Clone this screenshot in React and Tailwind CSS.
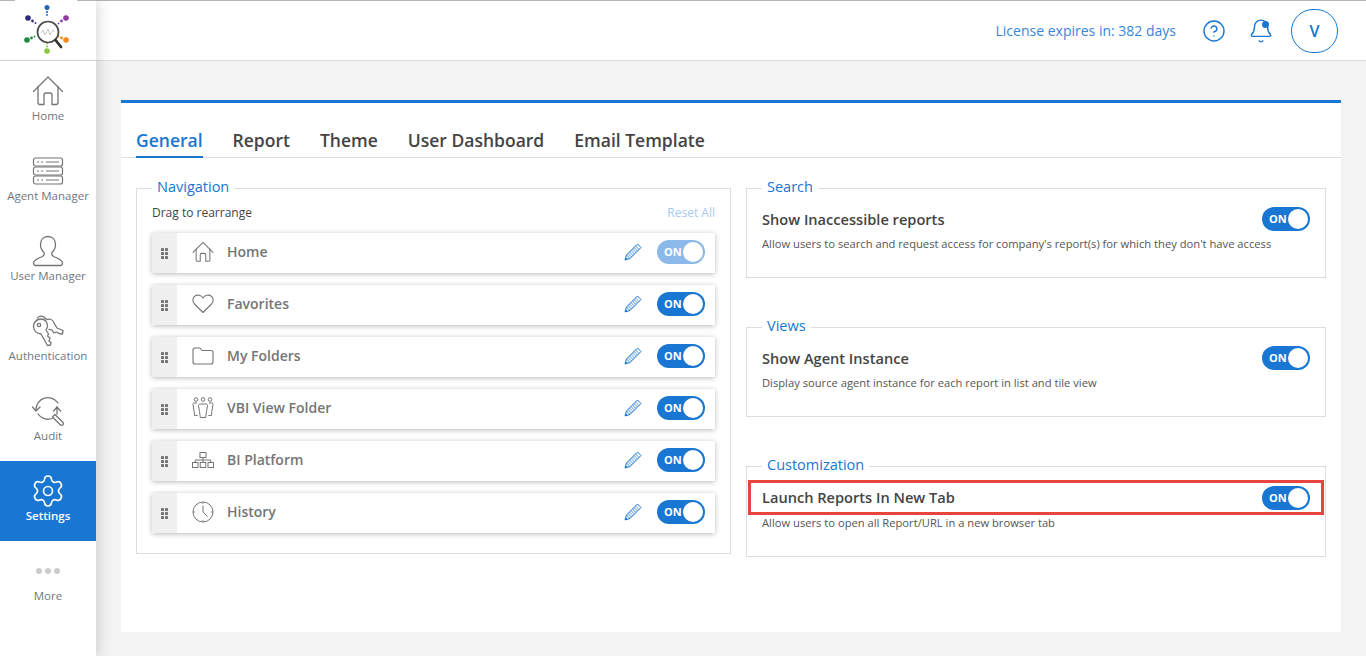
import React from "react";
import { Bell, CircleHelp, Settings } from "lucide-react";

const Logo = () => (
  <svg width="56" height="56" viewBox="0 0 56 56">
    <g fill="#1f66b8">
      <circle cx="29" cy="4.500" r="2.500" />
      <circle cx="29" cy="9" r="1.100" />
      <circle cx="29" cy="12" r="0.900" />
    </g>
    <g fill="#2b2a7c">
      <circle cx="10" cy="15" r="2.800" />
      <circle cx="14.500" cy="18" r="1.400" />
      <circle cx="17.500" cy="20" r="0.900" />
    </g>
    <g fill="#8e3aa0">
      <circle cx="48" cy="15" r="2.800" />
      <circle cx="43.500" cy="18" r="1.400" />
      <circle cx="40.500" cy="20.500" r="0.900" />
    </g>
    <g fill="#1a8a3c">
      <circle cx="9" cy="37" r="2.800" />
      <circle cx="13.500" cy="35" r="1.400" />
      <circle cx="16.500" cy="33.500" r="0.900" />
    </g>
    <g fill="#f28a1c">
      <circle cx="48" cy="37" r="2.800" />
      <circle cx="43.500" cy="35" r="1.400" />
      <circle cx="40.500" cy="33.500" r="0.900" />
    </g>
    <g fill="#8cc63f">
      <circle cx="29" cy="48" r="2.800" />
      <circle cx="29" cy="43.500" r="1.100" />
      <circle cx="29" cy="40.500" r="0.900" />
    </g>
    <circle cx="30" cy="29" r="10.500" fill="none" stroke="#4a4a4a" strokeWidth="1.700" />
    <path d="M23 30 l2 -3 l2 5 l3 -6 l2 6 l3 -5 l2 2" fill="none" stroke="#b5b5b5" strokeWidth="0.700" />
    <path d="M37.500 37 L43 44" stroke="#333" strokeWidth="2.800" strokeLinecap="round" />
  </svg>
);

const HomeIcon = ({ size = 32 }) => (
  <svg width={size} height={size} viewBox="0 0 32 32" fill="none" stroke="currentColor" strokeWidth={size > 24 ? 1.3 : 1.5} strokeLinecap="round" strokeLinejoin="round">
    <path d="M1.500 16.500 L16 2 L30.500 16.500" />
    <path d="M6 11.500 V27.500 a2 2 0 0 0 2 2 h4 V20 a2 2 0 0 1 2 -2 h4 a2 2 0 0 1 2 2 V29.500 h4 a2 2 0 0 0 2 -2 V11.500" />
  </svg>
);

const ServerIcon = () => (
  <svg width="32" height="28" viewBox="0 0 32 28" fill="none" stroke="currentColor" strokeWidth="1.200">
    <rect x="1.500" y="1" width="29" height="8" rx="2" />
    <rect x="1.500" y="10" width="29" height="8" rx="2" />
    <rect x="1.500" y="19" width="29" height="8" rx="2" />
    <path d="M5 5h2M9 5h2M14 5h13M5 14h2M9 14h2M14 14h13M5 23h2M9 23h2M14 23h13" />
  </svg>
);

const UserIcon = () => (
  <svg width="32" height="32" viewBox="0 0 32 32" fill="none" stroke="currentColor" strokeWidth="1.300" strokeLinejoin="round">
    <path d="M16 1.500 c-5 0 -7.500 3.500 -7.500 8 c0 3.500 1.500 6 3.500 8 c0.500 1.500 0 3 -1.500 4 c-3 1.500 -8.500 2.500 -9 6.500 c0 1.500 0.500 2.500 2 2.500 h25 c1.500 0 2 -1 2 -2.500 c-0.500 -4 -6 -5 -9 -6.500 c-1.500 -1 -2 -2.500 -1.500 -4 c2 -2 3.500 -4.500 3.500 -8 c0 -4.500 -2.500 -8 -7.500 -8 z" />
  </svg>
);

const KeysIcon = () => (
  <svg width="32" height="32" viewBox="0 0 32 32" fill="none" stroke="currentColor" strokeWidth="1.300" strokeLinejoin="round">
    <path d="M3 7 C6 3 12 3 14.500 7 C16 10 15.500 13 14 15 L16.500 19 L15.500 21 L18 23 L17 26 L19 27.500 L18.500 30 L15.500 30.500 L9 19 C5 18.500 2 16 1.500 12 C1.500 10 2 8 3 7 Z" />
    <path d="M5 3.500 C7 0.500 11 0.500 13 3 L15 4.500 C18 3.500 21 5 22 8 L25 13 L31 15.500 L30.500 19 L27 18.500 L24.500 17 L22 18 L20 15 C18.500 15 17.500 14.500 16.500 14" />
    <circle cx="7" cy="10" r="1.700" />
  </svg>
);

const AuditIcon = () => (
  <svg width="32" height="32" viewBox="0 0 32 32" fill="none" stroke="currentColor" strokeWidth="1.300" strokeLinecap="round" strokeLinejoin="round">
    <path d="M4 15 A12 12 0 0 1 26 8" />
    <path d="M6 19 A12 12 0 0 0 20 23.500" />
    <path d="M0.500 12 L4 16 L8 12" />
    <path d="M21.500 16 L25 12 L28.500 16" />
    <path d="M25 12 V19" />
    <path d="M20.500 22 L23 19.500 L31 27.500 A1.800 1.800 0 0 1 28.500 30 Z" />
  </svg>
);

const HeartIcon = () => (
  <svg width="22" height="20" viewBox="0 0 22 20" fill="none" stroke="currentColor" strokeWidth="1.100" strokeLinejoin="round">
    <path d="M11 18.500 L2.500 10 C0 7.500 0.500 3.500 3 2 C5.500 0.500 9 1 11 4 C13 1 16.500 0.500 19 2 C21.500 3.500 22 7.500 19.500 10 Z" />
  </svg>
);

const FolderIcon = () => (
  <svg width="22" height="18" viewBox="0 0 22 18" fill="none" stroke="currentColor" strokeWidth="1.100" strokeLinejoin="round">
    <path d="M1 3 a2 2 0 0 1 2 -2 h5 l2 2.500 h9 a2 2 0 0 1 2 2 v9.500 a2 2 0 0 1 -2 2 h-16 a2 2 0 0 1 -2 -2 z" />
  </svg>
);

const PeopleIcon = () => (
  <svg width="22" height="22" viewBox="0 0 22 22" fill="none" stroke="currentColor" strokeWidth="1">
    <circle cx="4" cy="2.500" r="1.800" />
    <circle cx="11" cy="2.500" r="1.800" />
    <circle cx="18" cy="2.500" r="1.800" />
    <path d="M7.500 7 h7 c0.800 0 1 1 1 1.500 l-1 6 l-0.800 6 h-5.400 l-0.800 -6 l-1 -6 c0 -0.500 0.200 -1.500 1 -1.500 z" />
    <path d="M5 6 h-3 c-0.800 0 -1 1 -1 1.500 l1 6 l0.600 5 h3" />
    <path d="M17 6 h3 c0.800 0 1 1 1 1.500 l-1 6 l-0.600 5 h-3" />
  </svg>
);

const TreeIcon = () => (
  <svg width="22" height="16" viewBox="0 0 22 16" fill="none" stroke="currentColor" strokeWidth="1">
    <rect x="8" y="0.500" width="6" height="5" />
    <rect x="0.500" y="10.500" width="5.500" height="5" />
    <rect x="8.250" y="10.500" width="5.500" height="5" />
    <rect x="16" y="10.500" width="5.500" height="5" />
    <path d="M11 5.500 V10.500 M3.250 10.500 V8 H18.750 V10.500" />
  </svg>
);

const ClockIcon = () => (
  <svg width="22" height="22" viewBox="0 0 22 22" fill="none" stroke="currentColor" strokeWidth="1">
    <circle cx="11" cy="11" r="10" />
    <path d="M11 4.500 V11 L15.500 15.500" />
    <path d="M11 1.500 v1.500 M11 19 v1.500 M1.500 11 h1.500 M19 11 h1.500" />
  </svg>
);

const PencilIcon = () => (
  <svg width="18" height="18" viewBox="0 0 18 18" fill="none" stroke="#1976d2" strokeWidth="1">
    <path d="M13.500 1 L17 4.500 L6 15.500 L1 17 L2.500 12 Z" />
    <path d="M11.500 3 L15 6.500 M10 4.500 L13.500 8 M8.500 6 L12 9.500 M7 7.500 L10.500 11 M5.500 9 L9 12.500 M4 10.500 L7.500 14 M2.500 12 L6 15.500" strokeWidth="0.800" />
    <path d="M3 16.500 L1.500 15" strokeWidth="1.500" />
  </svg>
);

const Grip = () => (
  <svg width="7" height="11" viewBox="0 0 7 11" fill="#757575">
    <rect x="0" y="0" width="3" height="3" rx="0.600" />
    <rect x="4" y="0" width="3" height="3" rx="0.600" />
    <rect x="0" y="4" width="3" height="3" rx="0.600" />
    <rect x="4" y="4" width="3" height="3" rx="0.600" />
    <rect x="0" y="8" width="3" height="3" rx="0.600" />
    <rect x="4" y="8" width="3" height="3" rx="0.600" />
  </svg>
);

const Toggle = ({ faded }) => (
  <div className={`flex h-6 w-12 shrink-0 items-center justify-between rounded-full bg-[#1976d2] pl-[7px] pr-0.5 ${faded ? "opacity-50" : ""}`}>
    <span className="text-[11px] font-bold text-white">ON</span>
    <span className="h-5 w-5 rounded-full bg-white"></span>
  </div>
);

const sideItems = [
  { label: "Home", icon: <HomeIcon /> },
  { label: "Agent Manager", icon: <ServerIcon /> },
  { label: "User Manager", icon: <UserIcon /> },
  { label: "Authentication", icon: <KeysIcon /> },
  { label: "Audit", icon: <AuditIcon /> },
  { label: "Settings", icon: <Settings size={36} strokeWidth={1.1} />, active: true },
];

const navRows = [
  { label: "Home", icon: <HomeIcon size={22} />, faded: true },
  { label: "Favorites", icon: <HeartIcon /> },
  { label: "My Folders", icon: <FolderIcon /> },
  { label: "VBI View Folder", icon: <PeopleIcon /> },
  { label: "BI Platform", icon: <TreeIcon /> },
  { label: "History", icon: <ClockIcon /> },
];

const tabs = ["General", "Report", "Theme", "User Dashboard", "Email Template"];

const Section = ({ title, className, children }) => (
  <fieldset className={`border border-[#dedede] ${className}`}>
    <legend className="ml-[15px] px-[5px] pb-[2px] text-[14.5px] leading-[18px] text-[#1976d2]">{title}</legend>
    {children}
  </fieldset>
);

const Sidebar = () => (
  <aside className="z-10 flex w-24 shrink-0 flex-col bg-white shadow-[3px_0_12px_rgba(0,0,0,0.14)]">
    <div className="relative flex h-[61px] items-center justify-center border-t border-b border-t-[#b5b5b5] border-b-[#d0d0d0] pr-1">
      <div className="absolute -top-px left-[15px] h-px w-[62px] bg-white"></div>
      <Logo />
    </div>
    {sideItems.map((item) => (
      <div
        key={item.label}
        className={`flex h-20 flex-col items-center pt-[13px] ${item.active ? "bg-[#1976d2] text-white" : "text-[#757575]"}`}
      >
        <div className="flex h-[34px] items-center justify-center">{item.icon}</div>
        <span className={`mt-px text-[11.5px] leading-[14px] ${item.active ? "font-semibold text-white" : "font-medium text-[#6f7880]"}`}>
          {item.label}
        </span>
      </div>
    ))}
    <div className="flex h-20 flex-col items-center pt-[27px]">
      <div className="flex gap-[3px]">
        <span className="h-[6px] w-[6px] rounded-full bg-[#cccccc]"></span>
        <span className="h-[6px] w-[6px] rounded-full bg-[#cccccc]"></span>
        <span className="h-[6px] w-[6px] rounded-full bg-[#cccccc]"></span>
      </div>
      <span className="mt-[15px] text-[11.5px] font-medium leading-[14px] text-[#6f7880]">More</span>
    </div>
  </aside>
);

const TopBar = () => (
  <header className="flex h-[61px] shrink-0 items-center justify-end border-t border-b border-t-[#b5b5b5] border-b-[#dedede] bg-white pr-[28px] text-[#1976d2]">
    <span className="text-[14px] text-[#3a86d8]">License expires in: 382 days</span>
    <CircleHelp className="ml-[26px]" size={24} strokeWidth={1.4} />
    <div className="relative ml-[22px]">
      <Bell size={26} strokeWidth={1.3} />
      <span className="absolute right-[5px] top-[3px] h-[7px] w-[7px] rounded-full bg-[#1976d2]"></span>
    </div>
    <div className="ml-[17px] flex h-[44px] w-[47px] items-center justify-center rounded-full border border-[#1976d2] text-[16px] font-semibold">
      V
    </div>
  </header>
);

const Setting = ({ title, desc }) => (
  <div className="px-[15px]">
    <div className="flex h-[24px] items-center justify-between">
      <span className="pt-px text-[14.6px] font-semibold text-[#444444]">{title}</span>
      <Toggle />
    </div>
    <p className="mt-[2px] text-[11.2px] leading-[22px] text-[#555555]">{desc}</p>
  </div>
);

export default function App() {
  return (
    <div className="flex h-[656px] w-[1366px] overflow-hidden bg-[#f3f3f3] font-['Open_Sans',sans-serif]">
      <Sidebar />
      <div className="flex min-w-0 flex-1 flex-col">
        <TopBar />
        <main className="mt-[39px] ml-[25px] mr-[25px] flex h-[532px] flex-col border-t-[3px] border-[#1976d2] bg-white">
          <nav className="mt-[23px] flex h-[32px] gap-[30px] border-b border-[#dedede] pl-[15px]">
            {tabs.map((tab, i) => (
              <div
                key={tab}
                className={`h-[32px] text-[17.5px] font-semibold leading-[28px] ${i === 0 ? "border-b-2 border-[#1976d2] text-[#1976d2]" : "text-[#444444]"}`}
              >
                {tab}
              </div>
            ))}
          </nav>
          <div className="mt-[20px] flex gap-[15px] px-[15px]">
            <Section title="Navigation" className="h-[376px] w-[595px]">
              <div className="flex items-center justify-between px-[15px] pt-[6px] text-[12px] leading-[18px]">
                <span className="text-[#444444]">Drag to rearrange</span>
                <span className="text-[#a8c9f0]">Reset All</span>
              </div>
              <div className="mt-[11px] flex flex-col gap-[12px] px-[15px]">
                {navRows.map((row) => (
                  <div key={row.label} className="flex h-10 bg-white shadow-[0_1px_5px_rgba(0,0,0,0.28)]">
                    <div className="flex w-[25px] items-center justify-center bg-[#f0f0f0]">
                      <Grip />
                    </div>
                    <div className="flex flex-1 items-center pb-[2px]">
                      <div className="flex w-[50px] items-center justify-center pl-[1px] text-[#757575]">{row.icon}</div>
                      <span className="flex-1 pb-[2px] text-[14px] font-semibold text-[#757575]">{row.label}</span>
                      <PencilIcon />
                      <div className="ml-[15px] mr-[10px]">
                        <Toggle faded={row.faded} />
                      </div>
                    </div>
                  </div>
                ))}
              </div>
            </Section>
            <div className="flex w-[580px] flex-col gap-[39px]">
              <Section title="Search" className="h-[100px] pt-[9px]">
                <Setting
                  title="Show Inaccessible reports"
                  desc="Allow users to search and request access for company's report(s) for which they don't have access"
                />
              </Section>
              <Section title="Views" className="h-[100px] pt-[9px]">
                <Setting
                  title="Show Agent Instance"
                  desc="Display source agent instance for each report in list and tile view"
                />
              </Section>
              <Section title="Customization" className="h-[101px]">
                <div className="mx-[1px] mt-[4px] flex h-[35px] items-center justify-between border-[3px] border-[#e8453f] px-[11px]">
                  <span className="text-[14.6px] font-semibold text-[#444444]">Launch Reports In New Tab</span>
                  <div className="mt-px">
                    <Toggle />
                  </div>
                </div>
                <p className="mt-[-3px] px-[15px] text-[11.2px] leading-[22px] text-[#555555]">
                  Allow users to open all Report/URL in a new browser tab
                </p>
              </Section>
            </div>
          </div>
        </main>
      </div>
    </div>
  );
}
